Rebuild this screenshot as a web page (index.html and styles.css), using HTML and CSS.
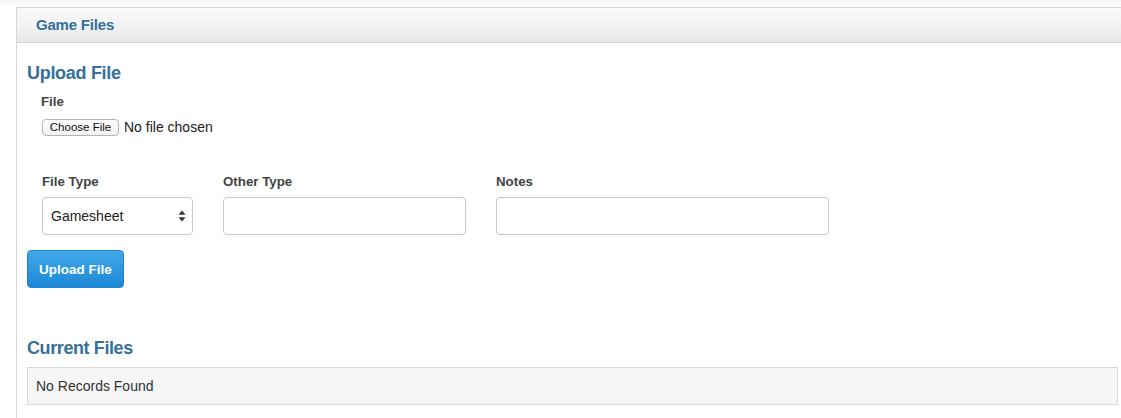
FILE: index.html
```html
<!DOCTYPE html>
<html>
<head>
<meta charset="utf-8">
<link rel="stylesheet" href="styles.css">
</head>
<body>
<div class="panel">
  <div class="panel-header">Game Files</div>
  <div class="panel-body">
    <h3 class="section-title">Upload File</h3>
    <div class="form-area">
      <div class="file-group">
        <div class="label">File</div>
        <div class="file-input">
          <span class="file-btn">Choose File</span>
          <span class="file-none">No file chosen</span>
        </div>
      </div>
      <div class="form-row">
        <div class="field field-type">
          <div class="label">File Type</div>
          <div class="select">
            <span>Gamesheet</span>
            <svg class="arrows" width="8" height="12" viewBox="0 0 8 12"><path d="M4 0.5 L7.5 4.8 L0.5 4.8 Z" fill="#333"/><path d="M4 11.5 L7.5 7.2 L0.5 7.2 Z" fill="#333"/></svg>
          </div>
        </div>
        <div class="field field-other">
          <div class="label">Other Type</div>
          <div class="input"></div>
        </div>
        <div class="field field-notes">
          <div class="label">Notes</div>
          <div class="input"></div>
        </div>
      </div>
    </div>
    <button class="btn-primary">Upload File</button>
    <h3 class="section-title current">Current Files</h3>
    <div class="records">No Records Found</div>
  </div>
</div>
</body>
</html>
```
FILE: styles.css
```css
html, body {
  margin: 0;
  padding: 0;
  overflow: hidden;
  background: #fff;
  font-family: "Liberation Sans", Arial, sans-serif;
  color: #333;
}
body {
  background: linear-gradient(#f6f6f6, #fff 7px);
}
.panel {
  margin: 7px -8px 0 16px;
  border: 1px solid #d6d6d6;
  background: #fff;
  min-height: 420px;
}
.panel-header {
  height: 34px;
  line-height: 34px;
  padding-left: 19px;
  font-size: 15px;
  font-weight: bold;
  color: #35709c;
  background: linear-gradient(#fbfbfb, #e9e9e9);
  border-bottom: 1px solid #d2d2d2;
  letter-spacing: -0.2px;
}
.panel-body {
  padding: 0 10px;
}
.section-title {
  margin: 19px 0 0 0;
  font-size: 18px;
  line-height: 22px;
  font-weight: bold;
  color: #35709c;
  letter-spacing: -0.3px;
}
.section-title.current {
  margin-top: 49px;
  letter-spacing: -0.4px;
}
.form-area {
  padding-left: 15px;
}
.file-group {
  padding-top: 9px;
}
.label {
  font-size: 13.3px;
  font-weight: bold;
  line-height: 18px;
  color: #444;
}
.file-group .label {
  margin-left: -1px;
}
.file-input {
  margin-top: 8px;
  display: flex;
  align-items: center;
  height: 17px;
}
.file-btn {
  box-sizing: border-box;
  height: 17px;
  width: 77px;
  border: 1px solid #b5b5b5;
  border-radius: 4px;
  background: linear-gradient(#ffffff, #f1f1f1);
  font-size: 11.5px;
  line-height: 15px;
  text-align: center;
  color: #111;
}
.file-none {
  margin-left: 5px;
  font-size: 14px;
  color: #222;
  line-height: 17px;
}
.form-row {
  display: flex;
  gap: 30px;
  margin-top: 37px;
}
.field .label {
  margin-bottom: 6px;
}
.field-type { width: 151px; }
.field-other { width: 243px; }
.field-notes { width: 333px; }
.select, .input {
  box-sizing: border-box;
  height: 38px;
  border: 1px solid #c8c8c8;
  border-radius: 4px;
  background: #fff;
}
.select {
  display: flex;
  align-items: center;
  justify-content: space-between;
  padding: 0 6px 0 8px;
  font-size: 14px;
  color: #222;
}
.arrows {
  display: block;
}
.btn-primary {
  display: block;
  margin-top: 15px;
  box-sizing: border-box;
  width: 97px;
  height: 38px;
  padding: 0;
  border: 1px solid #1f82cf;
  border-radius: 4px;
  background: linear-gradient(#42a9e8, #1c87d6);
  color: #fff;
  font-family: "Liberation Sans", Arial, sans-serif;
  font-size: 13.5px;
  font-weight: bold;
}
.records {
  margin-top: 8px;
  border: 1px solid #d9d9d9;
  background: #f6f6f6;
  padding: 8px 8px;
  font-size: 14px;
  line-height: 20px;
  color: #333;
}
```
